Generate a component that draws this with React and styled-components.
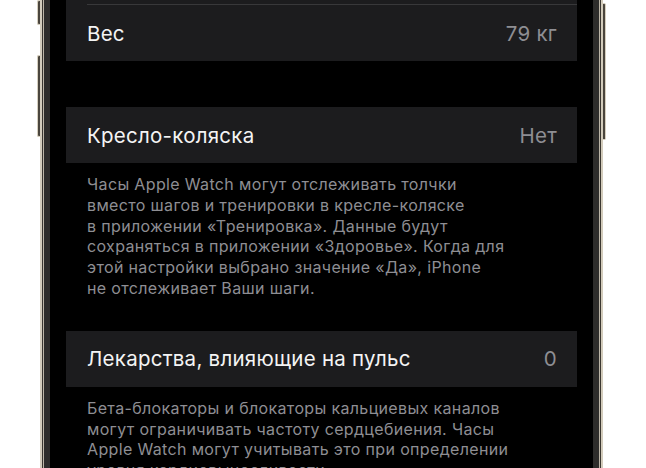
import React from 'react'
import styled, { createGlobalStyle } from 'styled-components'

const GlobalStyle = createGlobalStyle`
  html, body {
    margin: 0;
    padding: 0;
    background: #fff;
    overflow: hidden;
  }
  body {
    font-family: 'Inter', 'Roboto', 'Noto Sans', sans-serif;
    -webkit-font-smoothing: antialiased;
  }
`

const Stage = styled.div`
  display: flex;
  height: 468px;
  padding-left: 37px;
`

const SideButtons = styled.div`
  display: flex;
  flex-direction: column;
  width: 3px;
  padding-top: ${(p) => p.$top || 0}px;
`

const SideButton = styled.div`
  height: ${(p) => p.$h}px;
  margin-bottom: ${(p) => p.$gap || 0}px;
  background: #4a453d;
  border: 1px solid #d6cfbf;
  border-${(p) => (p.$right ? 'left' : 'right')}: none;
  border-radius: ${(p) => (p.$right ? '0 2px 2px 0' : '2px 0 0 2px')};
  box-sizing: border-box;
`

const Device = styled.div`
  width: 563px;
  height: 100%;
  background: #000;
  box-sizing: border-box;
  padding: 0 10px;
  box-shadow:
    inset 2px 0 #d3ccbc,
    inset 3px 0 #3b3731,
    inset 4px 0 #bcb5a7,
    inset 10px 0 #2e2d2b,
    inset -2px 0 #d3ccbc,
    inset -3px 0 #3b3731,
    inset -4px 0 #bcb5a7,
    inset -10px 0 #2e2d2b;
  overflow: hidden;
`

const Scroll = styled.div`
  display: flex;
  flex-direction: column;
  padding: 0 16px;
`

const Group = styled.div`
  display: flex;
  flex-direction: column;
  background: #1c1c1e;
  margin-top: ${(p) => p.$gap || 0}px;
`

const Row = styled.div`
  display: flex;
  align-items: center;
  justify-content: space-between;
  height: ${(p) => p.$h || 56}px;
  padding: 0 20px 0 21px;
  font-size: 20.5px;
  letter-spacing: 0.25px;
`

const Separator = styled.div`
  height: 1px;
  margin-left: 21px;
  background: #38383a;
`

const Label = styled.span`
  color: #f4f4f4;
`

const Value = styled.span`
  color: #8e8e93;
`

const Footnote = styled.p`
  margin: 11px 0 0;
  padding: 0 21px;
  color: #8e8e93;
  font-size: 16px;
  line-height: 20.8px;
  letter-spacing: 0.35px;
  white-space: pre-line;
`

export default function App() {
  return (
    <>
      <GlobalStyle />
      <Stage>
        <SideButtons>
          <SideButton $h={25} $gap={30} />
          <SideButton $h={82} />
        </SideButtons>
        <Device>
          <Scroll>
            <Group>
              <Row $h={4} />
              <Separator />
              <Row>
                <Label>Вес</Label>
                <Value>79 кг</Value>
              </Row>
            </Group>

            <Group $gap={46}>
              <Row>
                <Label>Кресло-коляска</Label>
                <Value>Нет</Value>
              </Row>
            </Group>
            <Footnote>
              {'Часы Apple Watch могут отслеживать толчки\nвместо шагов и тренировки в кресле-коляске\nв приложении «Тренировка». Данные будут\nсохраняться в приложении «Здоровье». Когда для\nэтой настройки выбрано значение «Да», iPhone\nне отслеживает Ваши шаги.'}
            </Footnote>

            <Group $gap={32}>
              <Row>
                <Label>Лекарства, влияющие на пульс</Label>
                <Value>0</Value>
              </Row>
            </Group>
            <Footnote>
              {'Бета-блокаторы и блокаторы кальциевых каналов\nмогут ограничивать частоту сердцебиения. Часы\nApple Watch могут учитывать это при определении\nуровня кардиовыносливости.'}
            </Footnote>
          </Scroll>
        </Device>
        <SideButtons $top={3}>
          <SideButton $h={137} $right />
        </SideButtons>
      </Stage>
    </>
  )
}
